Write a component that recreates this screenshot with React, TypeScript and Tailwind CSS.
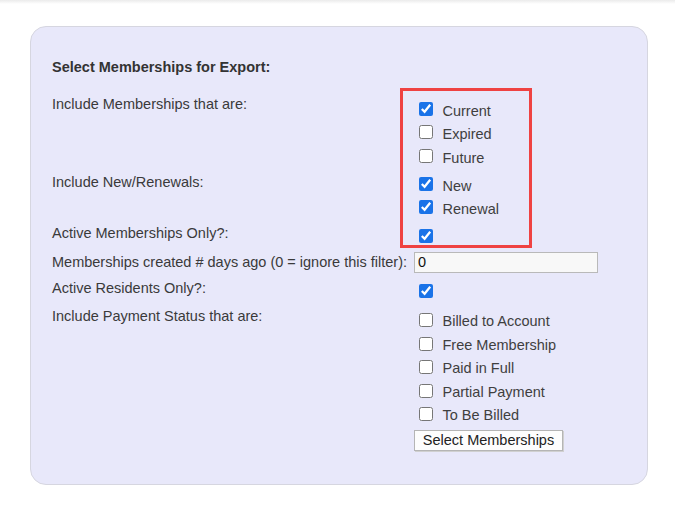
import React from 'react'

const Check = ({ label, checked }: { label?: string; checked?: boolean }) => (
  <div className="flex items-center h-[23.5px]">
    <input type="checkbox" defaultChecked={checked} className="ml-[4.5px] w-[14px] h-[14px] accent-[#1a73e8]" />
    {label && <span className="ml-[10px] mt-[5px] leading-[17px] text-[#3f3f3f]">{label}</span>}
  </div>
)

const PayCheck = ({ label }: { label: string }) => (
  <div className="flex items-center h-[23.5px]">
    <input type="checkbox" className="ml-[4.5px] w-[14px] h-[14px] accent-[#1a73e8]" />
    <span className="ml-[10px] mt-[3px] leading-[17px] text-[#3f3f3f]">{label}</span>
  </div>
)

export default function App() {
  return (
    <div className="min-h-screen bg-white font-['Liberation_Sans',Arial,sans-serif] text-[14.5px] text-[#3a3a3a]">
      <div className="h-[4px] bg-gradient-to-b from-[#ebebeb] to-white" />
      <div className="pt-[22px] pl-[30px]">
        <div className="relative w-[618px] h-[459px] rounded-[16px] border border-[#d6d6e0] bg-[#e8e8fa] pl-[21px] pt-[31.5px]">
          <div className="font-bold leading-[17px] text-[#333]">Select Memberships for Export:</div>

          {/* memberships */}
          <div className="flex mt-[21.5px]">
            <div className="w-[362px] leading-[17px] mt-[-1.5px]">Include Memberships that are:</div>
            <div>
              <Check label="Current" checked />
              <Check label="Expired" />
              <Check label="Future" />
            </div>
          </div>

          <div className="flex mt-[4.5px]">
            <div className="w-[362px] leading-[17px] mt-[1.5px]">Include New/Renewals:</div>
            <div>
              <Check label="New" checked />
              <Check label="Renewal" checked />
            </div>
          </div>

          <div className="flex mt-[4.75px]">
            <div className="w-[362px] leading-[17px] mt-[0.75px]">Active Memberships Only?:</div>
            <div>
              <Check checked />
            </div>
          </div>

          <div className="flex items-center mt-[4.75px] h-[21px]">
            <div className="w-[362px] leading-[17px]">Memberships created # days ago (0 = ignore this filter):</div>
            <input
              type="text"
              defaultValue="0"
              className="w-[184px] h-[21px] border border-[#b9b9b9] bg-[#f8f8f8] pl-[3px] text-[14.5px] text-[#111] outline-none"
            />
          </div>

          <div className="flex mt-[6.25px]">
            <div className="w-[362px] leading-[17px] mt-[0.25px]">Active Residents Only?:</div>
            <div>
              <Check checked />
            </div>
          </div>

          <div className="flex mt-[5.5px]">
            <div className="w-[362px] leading-[17px] mt-[-0.75px]">Include Payment Status that are:</div>
            <div>
              <PayCheck label="Billed to Account" />
              <PayCheck label="Free Membership" />
              <PayCheck label="Paid in Full" />
              <PayCheck label="Partial Payment" />
              <PayCheck label="To Be Billed" />
            </div>
          </div>

          <div className="flex mt-[4.5px]">
            <div className="w-[362px]" />
            <button className="w-[149px] h-[21px] border border-[#b5b5b5] bg-[#fdfdfd] shadow-[1px_1px_0_#d0d0d0] text-[14.5px] leading-[17px] text-[#222]">
              Select Memberships
            </button>
          </div>

          {/* annotation */}
          <div className="absolute left-[369px] top-[61px] w-[132px] h-[160px] border-[3px] border-[#ef4242]" />
        </div>
      </div>
    </div>
  )
}
